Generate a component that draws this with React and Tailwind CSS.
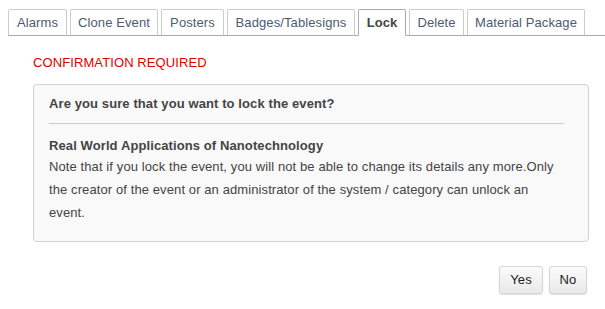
const tabs = [
  { label: 'Alarms', w: 'w-[59px]' },
  { label: 'Clone Event', w: 'w-[88px]' },
  { label: 'Posters', w: 'w-[63px]' },
  { label: 'Badges/Tablesigns', w: 'w-[128px]' },
  { label: 'Lock', w: 'w-[48px]' },
  { label: 'Delete', w: 'w-[55px]' },
  { label: 'Material Package', w: 'w-[118px]' },
]

export default function App() {
  return (
    <div className="w-[605px] h-[309px] bg-white font-['Liberation_Sans',Arial,sans-serif] text-[13px] tracking-[0.1px]">
      <div className="pt-[9px] pl-[8px]">
        <div className="flex gap-[3px] border-b border-[#aaaaaa]">
          {tabs.map(t => {
            const active = t.label === 'Lock'
            return (
              <div
                key={t.label}
                className={[
                  t.w,
                  'h-[27px] -mb-px flex items-center justify-center border rounded-t-[2px] whitespace-nowrap',
                  active
                    ? 'border-[#aaaaaa] border-b-white bg-white font-bold text-[#444]'
                    : 'border-[#cccccc] border-b-[#aaaaaa] text-[#4b5c70]',
                ].join(' ')}
              >
                {t.label}
              </div>
            )
          })}
        </div>
      </div>

      <div className="pl-[33px] pr-[16px]">
        <div className="mt-[19px] text-[#e00000] leading-[16px]">CONFIRMATION REQUIRED</div>

        <div className="mt-[13px] w-[556px] h-[158px] border border-[#cfd3d6] rounded-[4px] bg-[#f9f9f9] px-[15px] pt-[11px] text-[#444]">
          <div className="font-bold leading-[16px]">Are you sure that you want to lock the event?</div>
          <div className="mt-[11px] w-[515px] border-t border-[#c8cccf]" />
          <div className="mt-[13px] font-bold leading-[18px]">Real World Applications of Nanotechnology</div>
          <p className="w-[515px] leading-[23px]">
            Note that if you lock the event, you will not be able to change its details any more.Only the creator of
            the event or an administrator of the system / category can unlock an event.
          </p>
        </div>

        <div className="mt-[24px] flex justify-end gap-[6px] pr-[2px]">
          <button className="h-[28px] w-[44px] rounded-[3px] border border-[#d4d4d4] bg-gradient-to-b from-[#fbfbfb] to-[#e9e9e9] text-[#222] shadow-[0_1px_1px_rgba(0,0,0,0.12)]">
            Yes
          </button>
          <button className="h-[28px] w-[38px] rounded-[3px] border border-[#d4d4d4] bg-gradient-to-b from-[#fbfbfb] to-[#e9e9e9] text-[#222] shadow-[0_1px_1px_rgba(0,0,0,0.12)]">
            No
          </button>
        </div>
      </div>
    </div>
  )
}
